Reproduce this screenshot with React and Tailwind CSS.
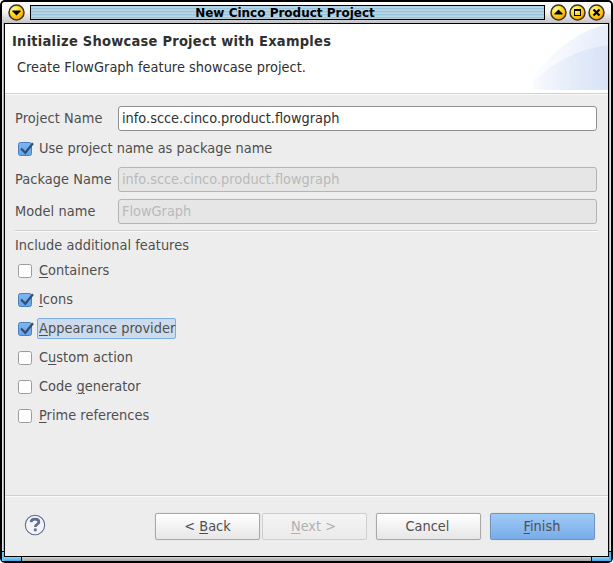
function TitleButton({ kind }) {
  return (
    <svg width="17" height="17" viewBox="0 0 17 17" className="shrink-0">
      <defs>
        <radialGradient id="amber" cx=".35" cy=".3" r=".75">
          <stop offset="0" stopColor="#fff9a0" />
          <stop offset=".45" stopColor="#ffdc20" />
          <stop offset="1" stopColor="#ff9c00" />
        </radialGradient>
      </defs>
      <circle cx="8.5" cy="8.5" r="7.5" fill="url(#amber)" stroke="#38342c" strokeWidth="1.5" />
      {kind === "menu" && <path d="M4.5 6.5h8v1l-4 4-4-4z" />}
      {kind === "up" && <path d="M4.5 10.5h8v-1l-4-4-4 4z" />}
      {kind === "max" && <path d="M5 5h7v7H5zM6 7v4h5V7z" fillRule="evenodd" />}
      {kind === "close" && <path d="M5.5 5.5l6 6M11.5 5.5l-6 6" stroke="#000" strokeWidth="2.2" />}
    </svg>
  );
}

function TitleBar() {
  return (
    <div className="flex h-[21px] items-start bg-gradient-to-b from-white via-[#f2f2f2] to-[#c4c4c4] pl-[6px] pt-[2px]">
      <TitleButton kind="menu" />
      <div className="ml-[5px] mt-px h-[15px] w-[515px] border border-black bg-[repeating-linear-gradient(180deg,#afd0e2_0_1px,#bcd8e7_1px_2px,#98c3da_2px_3px)] pr-[5px] text-center font-['DejaVu_Sans',sans-serif] text-[12px] font-bold leading-[14px] text-black">
        New Cinco Product Project
      </div>
      <div className="ml-[5px] flex gap-[2px]">
        <TitleButton kind="up" />
        <TitleButton kind="max" />
        <TitleButton kind="close" />
      </div>
    </div>
  );
}

function BannerArt() {
  return (
    <svg width="75" height="66" viewBox="0 0 75 66" className="shrink-0">
      <defs>
        <linearGradient id="fade" x1="0" x2="1">
          <stop offset="0" stopColor="#e4ebf9" stopOpacity="0" />
          <stop offset="1" stopColor="#e4ebf9" stopOpacity=".85" />
        </linearGradient>
        <linearGradient id="deep" x1="0" x2="1">
          <stop offset="0" stopColor="#d6e1f6" stopOpacity="0" />
          <stop offset="1" stopColor="#d6e1f6" stopOpacity=".8" />
        </linearGradient>
      </defs>
      <path d="M-8 66C10 36 38 8 75 0v66z" fill="url(#fade)" />
      <path d="M25 40C36 21 54 6 75 0v22C56 26 40 32 25 40z" fill="url(#fade)" opacity=".4" />
      <path d="M-8 66C12 43 40 26 75 21v45z" fill="url(#deep)" />
    </svg>
  );
}

function Check({ on }) {
  return (
    <svg width="17" height="17" viewBox="0 0 17 17" className="relative top-px shrink-0">
      <defs>
        <linearGradient id="checked" x1="0" y1="0" x2="0" y2="1">
          <stop offset="0" stopColor="#7db5f2" />
          <stop offset="1" stopColor="#62a6f0" />
        </linearGradient>
      </defs>
      <rect x=".5" y="1.5" width="13" height="13" rx="2" fill={on ? "url(#checked)" : "#fff"} stroke={on ? "#4a80bc" : "#9c9c9c"} />
      {on && <path d="M3 7.5l4.300 4.300L15 2.200" fill="none" stroke="#34506e" strokeWidth="2.200" />}
    </svg>
  );
}

function Feature({ on, focused, children }) {
  return (
    <div className="flex h-[29px] items-center pl-[13px]">
      <Check on={on} />
      <span className={"ml-[2px] flex h-[21px] items-center whitespace-pre rounded-[2px] border pl-px leading-[17px] tracking-[0.03px] " + (focused ? "border-[#7dade3] bg-[#cddcec]" : "border-transparent")}>
        <span>{children}</span>
      </span>
    </div>
  );
}

function Field({ label, value, disabled }) {
  return (
    <div className="flex h-[25px] items-center pl-[10px]">
      <span className="w-[103px] shrink-0 tracking-[0.08px]">{label}</span>
      <div className={"h-[25px] w-[479px] rounded-[3px] border px-[3px] leading-[22px] " + (disabled ? "border-[#b4b4b4] bg-[#e6e6e6] text-[#b9b9b9]" : "border-[#8f8f8f] bg-white text-[#303030]")}>{value}</div>
    </div>
  );
}

function Button({ className, children }) {
  return <div className={"h-[27px] w-[105px] shrink-0 rounded-[2px] border text-center leading-[24px] " + className}>{children}</div>;
}

const plain = "border-[#a9a9a9] bg-gradient-to-b from-white to-[#e6e6e6] shadow-[0_0_1px_#bbb]";
const U = ({ children }) => <span className="underline decoration-1 underline-offset-2">{children}</span>;

function Divider({ className = "" }) {
  return <div className={"h-[2px] border-b border-t border-b-[#fafafa] border-t-[#d0d0d0] " + className} />;
}

export default function App() {
  return (
    <div className="bg-white">
      <div className="relative h-[563px] w-[613px] overflow-hidden rounded-[5px] bg-black p-[2px] font-['DejaVu_Sans_Condensed','DejaVu_Sans',sans-serif] text-[14.4px] text-[#4f4f4f]">
        <div className="h-[559px] overflow-hidden rounded-t-[3px] bg-[#b8b8b8]">
          <TitleBar />
          <div className="flex h-[534px] border-x border-[#e4e4e4] bg-[#b0b0b0] px-px">
            <div className="flex w-[605px] flex-col border border-black bg-[#ededed]">
              <header className="flex h-[69px] bg-white text-[#303030]">
                <div className="w-[528px] shrink-0 whitespace-nowrap pl-[7px] pt-[8px]">
                  <h1 className="text-[14.5px] font-bold leading-[18px] tracking-[0.25px]">Initialize Showcase Project with Examples</h1>
                  <p className="ml-[5px] mt-[8px] leading-[18px] tracking-[0.03px]">Create FlowGraph feature showcase project.</p>
                </div>
                <BannerArt />
              </header>
              <Divider />
              <main className="h-[400px] pt-[11px]">
                <Field label="Project Name" value="info.scce.cinco.product.flowgraph" />
                <div className="mb-[4px] mt-[3px]">
                  <Feature on>Use project name as package name</Feature>
                </div>
                <Field label="Package Name" value="info.scce.cinco.product.flowgraph" disabled />
                <div className="h-[7px]" />
                <Field label="Model name" value="FlowGraph" disabled />
                <Divider className="ml-[10px] mr-[10px] mt-[6px]" />
                <p className="pl-[10px] pt-[4px] leading-[18px] tracking-[0.03px]">Include additional features</p>
                <div className="mt-[2px]">
                  <Feature><U>C</U>ontainers</Feature>
                  <Feature on><U>I</U>cons</Feature>
                  <Feature on focused><U>A</U>ppearance provider</Feature>
                  <Feature>C<U>u</U>stom action</Feature>
                  <Feature>Code <U>g</U>enerator</Feature>
                  <Feature><U>P</U>rime references</Feature>
                </div>
              </main>
              <Divider />
              <footer className="flex pl-[19px] pt-[16px]">
                <svg width="22" height="22" viewBox="0 0 22 22" className="mr-[109px] mt-[1px] shrink-0">
                  <circle cx="11" cy="11" r="9.7" fill="#f4f4f6" stroke="#5d6e92" strokeWidth="1.1" />
                  <path d="M7 8.200C7.300 5.900 9 5.200 11 5.200c2.400 0 3.900 1.100 3.900 2.900 0 2.500-3.600 2.300-3.600 5" fill="none" stroke="#5d6e92" strokeWidth="2.700" />
                  <path d="M9.900 14.600h2.800v2.700h-2.800z" fill="#5d6e92" />
                </svg>
                <Button className={plain}>&lt; <U>B</U>ack</Button>
                <Button className="ml-[2px] border-[#cfcfcf] bg-gradient-to-b from-[#f4f4f4] to-[#ebebeb] pr-[2px] text-[#b0b0b0]"><U>N</U>ext &gt;</Button>
                <Button className={"ml-[9px] pr-[2px] " + plain}>Cancel</Button>
                <Button className="ml-[9px] border-[#7195bd] bg-gradient-to-b from-[#9fcaf7] to-[#78ace8] pr-px shadow-[0_0_1px_#bbb]"><U>F</U>inish</Button>
              </footer>
            </div>
          </div>
          <div className="flex h-[4px] justify-between bg-gradient-to-b from-[#d4d4d4] to-[#a4a4a4]">
            <div className="w-[20px] border-r border-black bg-gradient-to-b from-[#8fd3f8] to-[#3fa9ec]" />
            <div className="w-[20px] border-l border-black bg-gradient-to-b from-[#8fd3f8] to-[#3fa9ec]" />
          </div>
        </div>
        <div className="absolute bottom-[2px] left-[2px] h-[10px] w-[2px] border-t border-black bg-[#6cc0f4]" />
        <div className="absolute bottom-[2px] right-[2px] h-[10px] w-[2px] border-t border-black bg-[#4fb0f0]" />
      </div>
    </div>
  );
}
